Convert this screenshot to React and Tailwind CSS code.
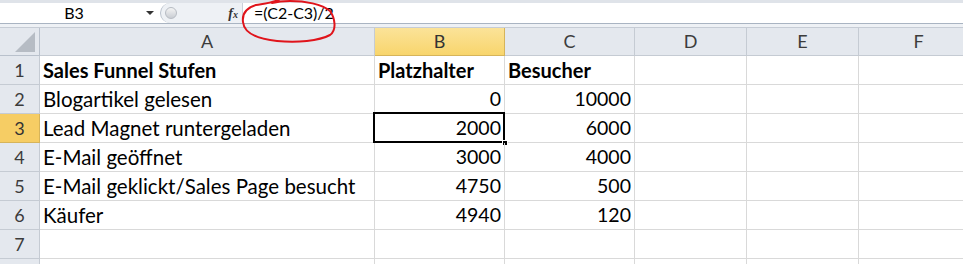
import React from "react";

const cols = [
  { key: "A", w: "w-[335px]" },
  { key: "B", w: "w-[130px]" },
  { key: "C", w: "w-[130px]" },
  { key: "D", w: "w-[112px]" },
  { key: "E", w: "w-[112px]" },
  { key: "F", w: "w-[120px]" },
];

const rows = [
  ["Sales Funnel Stufen", "Platzhalter", "Besucher", true],
  ["Blogartikel gelesen", "0", "10000"],
  ["Lead Magnet runtergeladen", "2000", "6000"],
  ["E-Mail geöffnet", "3000", "4000"],
  ["E-Mail geklickt/Sales Page besucht", "4750", "500"],
  ["Käufer", "4940", "120"],
  ["", "", ""],
  ["", "", ""],
];

export default function App() {
  const font = { fontFamily: "Lato, 'Open Sans', sans-serif" };
  return (
    <div className="w-[963px] h-[264px] overflow-hidden bg-white relative" style={font}>
      {/* formula bar */}
      <div className="h-[27px] bg-[#e6eaf0] flex flex-col">
        <div className="h-[3px] bg-[#dfe3e9]" />
        <div className="h-[21px] flex bg-white border-b border-[#a9b4c2]">
          <div className="w-[160px] flex items-center relative">
            <span className="flex-1 text-center text-[16px] text-black pr-[12px]">B3</span>
            <span className="absolute left-[146px] top-[8px] w-0 h-0 border-l-[4px] border-r-[4px] border-t-[4px] border-l-transparent border-r-transparent border-t-[#333]" />
          </div>
          <div className="w-[82px] flex items-center bg-[#eef1f5] rounded-l-full border-l border-[#b8c0cb]">
            <span className="ml-[4px] w-[12px] h-[12px] rounded-full bg-gradient-to-b from-[#f4f4f4] to-[#c9cdd3] border border-[#b7bcc3]" />
            <span className="ml-auto mr-[4px] italic font-bold text-[14px] text-[#333]" style={{ fontFamily: "'Liberation Serif', serif" }}>
              f<span className="text-[10px]">x</span>
            </span>
          </div>
          <div className="flex-1 flex items-center pl-[11px] text-[16px] text-black border-l border-[#c9d0d9]">
            =(C2-C3)/2
          </div>
        </div>
        <div className="h-[3px] bg-[#eef1f5]" />
      </div>

      {/* header row */}
      <div className="flex h-[29px] border-t border-[#c6ccd5]">
        <div className="w-[40px] shrink-0 bg-[#e4e8ee] border-r border-b border-[#b9c1cc] relative">
          <svg className="absolute right-[4px] bottom-[3px]" width="20" height="20" viewBox="0 0 20 20">
            <polygon points="20,0 20,20 0,20" fill="#b6bcc4" />
          </svg>
        </div>
        {cols.map((c) => (
          <div
            key={c.key}
            className={`${c.w} shrink-0 flex items-center justify-center text-[18px] border-r border-b ${
              c.key === "B"
                ? "bg-gradient-to-b from-[#fbe398] to-[#f8d56c] border-[#d6b45a] text-[#333]"
                : "bg-[#e4e8ee] border-[#c5cbd3] text-[#3c3c3c]"
            }`}
          >
            {c.key}
          </div>
        ))}
      </div>

      {/* rows */}
      {rows.map((r, i) => (
        <div key={i} className="flex h-[29px]">
          <div
            className={`w-[40px] shrink-0 flex items-center justify-center text-[18px] border-r border-b ${
              i === 2 ? "bg-[#f6cd64] border-[#d6b45a] text-[#333]" : "bg-[#e4e8ee] border-[#c5cbd3] text-[#3c3c3c]"
            }`}
          >
            {i < 7 ? i + 1 : ""}
          </div>
          <div className="w-[335px] shrink-0 border-r border-b border-[#d9d9d9] flex items-center pl-[3px] text-[20.5px] text-black whitespace-nowrap">
            <span className={r[3] ? "font-bold text-[20px]" : ""}>{r[0]}</span>
          </div>
          <div
            className={`w-[130px] shrink-0 border-r border-b border-[#d9d9d9] flex items-center text-black whitespace-nowrap relative ${
              r[3] ? "justify-start pl-[3px] font-bold text-[20px]" : "justify-end pr-[3px] text-[19.5px]"
            }`}
          >
            {r[1]}
            {i === 2 && (
              <>
                <div className="absolute left-[-2px] top-[-2px] right-[-1px] bottom-[-1px] border-2 border-black pointer-events-none" />
                <div className="absolute right-[-4px] bottom-[-4px] w-[6px] h-[6px] bg-black border border-white" />
              </>
            )}
          </div>
          <div
            className={`w-[130px] shrink-0 border-r border-b border-[#d9d9d9] flex items-center text-black whitespace-nowrap ${
              r[3] ? "justify-start pl-[3px] font-bold text-[20px]" : "justify-end pr-[3px] text-[19.5px]"
            }`}
          >
            {r[2]}
          </div>
          <div className="w-[112px] shrink-0 border-r border-b border-[#d9d9d9]" />
          <div className="w-[112px] shrink-0 border-r border-b border-[#d9d9d9]" />
          <div className="w-[120px] shrink-0 border-r border-b border-[#d9d9d9]" />
        </div>
      ))}

      {/* red hand-drawn circle */}
      <svg className="absolute left-0 top-0 pointer-events-none" width="963" height="264">
        <path
          d="M281,-2 C278,2 268,3 256,5 C246,8 242,14 243,22 C244,33 258,39 277,41 C297,43 319,41 330,35 C337,30 335,18 330,11 C322,4 305,1 290,1 C282,1 276,2 272,3"
          fill="none"
          stroke="#e0141b"
          strokeWidth="2"
          strokeLinecap="round"
        />
      </svg>
    </div>
  );
}
